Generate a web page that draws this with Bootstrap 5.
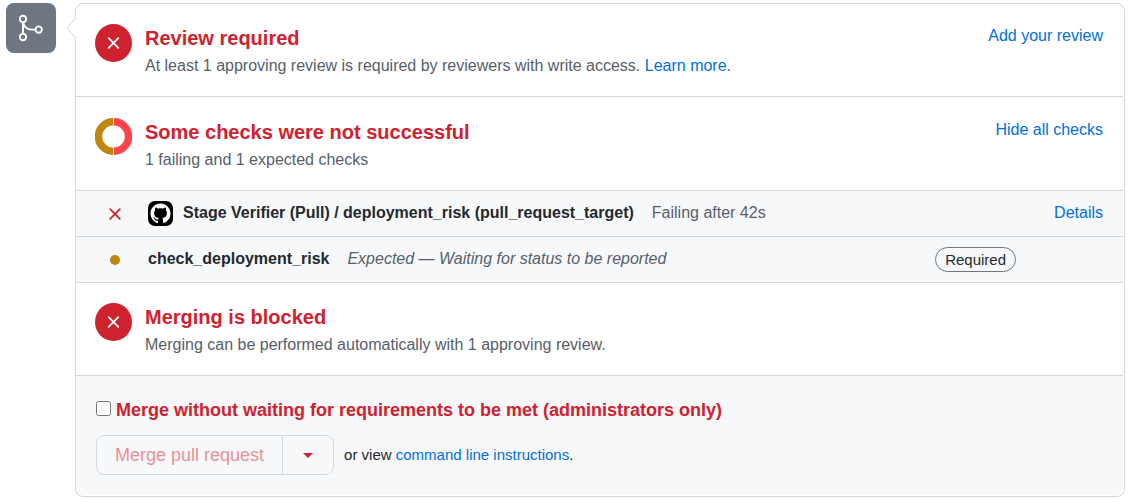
<!DOCTYPE html>
<html lang="en">
<head>
<meta charset="utf-8">
<meta name="viewport" content="width=device-width, initial-scale=1">
<title>Merge status</title>
<link rel="stylesheet" href="https://cdn.jsdelivr.net/npm/bootstrap@5.3.0/dist/css/bootstrap.min.css">
<style>
  :root { --line: #d0d7de; --soft: #f6f8fa; --danger: #cf222e; --ink: #24292f; --quiet: #57606a; --link: #0070dc; --pending: #bf8710; }
  body { font: 16px/26px "Liberation Sans", Arial, sans-serif; color: var(--ink); background: #fff; }
  a { color: var(--link); text-decoration: none; }
  a:hover { text-decoration: underline; }
  .merge-layout { padding: 3px 5px 5px 6px; }
  .merge-avatar { width: 50px; height: 50px; border-radius: 8px; background: #6e7781; color: #fff; }
  .merge-box { margin-left: 19px; border: 1px solid var(--line); border-radius: 8px; min-width: 0; padding: 0 1px 1px 0; }
  .box-caret { position: absolute; left: -10px; top: 14px; }
  .section-item { padding: 20px 20px 16px 19px; border-bottom: 1px solid var(--line); }
  .section-checks { padding-top: 21px; }
  .section-item h2 { font-size: 20px; line-height: 28px; font-weight: 700; color: var(--danger); margin: 0; }
  .section-item p { margin: 0; line-height: 28px; color: var(--quiet); }
  .status-circle { width: 37px; height: 38px; border-radius: 50%; background: var(--danger); color: #fff; margin-right: 13px; }
  .status-donut { margin-right: 13px; }
  .section-action { line-height: 24px; }
  .check-row { background: var(--soft); height: 46px; padding: 0 20px 0 19px; border-bottom: 1px solid var(--line); }
  .check-icon { width: 40px; margin-right: 13px; }
  .check-name, .check-desc, .check-link { line-height: 24px; padding-bottom: 2px; }
  .check-desc { color: var(--quiet); margin-left: 18px; }
  .check-avatar { margin-right: 10px; }
  .required-label { font-size: 15px; line-height: 23px; border: 1px solid #6e7781; border-radius: 25px; padding: 0 9px; margin-right: 87px; }
  .merge-footer { background: var(--soft); padding: 21px 20px 20px; border-radius: 0 0 7px 7px; }
  .admin-option label { font-size: 18px; font-weight: 700; color: var(--danger); }
  .admin-option input { width: 15px; height: 15px; margin: 0 5px 4px 0; }
  .merge-btn { height: 40px; font-size: 18px; line-height: 24px; background: var(--soft); border: 1px solid #d5d9dd; border-radius: 8px; color: var(--danger); padding: 0 18px; }
  .merge-btn:disabled { color: #e99296; background: var(--soft); border-color: #d5d9dd; opacity: 1; }
  .merge-menu { padding: 0 20px; }
  .merge-hint { font-size: 15px; margin-left: 10px; }
</style>
</head>
<body>
<main class="merge-layout d-flex align-items-start">
  <div class="merge-avatar d-flex flex-shrink-0 align-items-center justify-content-center">
    <svg width="30" height="30" viewBox="0 0 30 30" fill="none" stroke="currentColor" stroke-width="1.9" aria-hidden="true"><circle cx="7" cy="6" r="3.200"/><circle cx="7" cy="24" r="3.200"/><circle cx="22.700" cy="16.600" r="3.200"/><path d="M7 9.200v11.600M7 9.200c.8 4.600 4.400 7.400 9 7.400h3.500"/></svg>
  </div>

  <div class="merge-box flex-grow-1 position-relative">
    <svg class="box-caret" width="12" height="20" viewBox="0 0 12 20" aria-hidden="true"><path d="M12 0H10L1 10l9 10h2z" fill="#fff"/><path d="M9.500 0.500L.7 10l8.800 9.500" fill="none" stroke="#d0d7de"/></svg>

    <section class="section-item d-flex align-items-start">
      <span class="status-circle d-flex flex-shrink-0 align-items-center justify-content-center">
        <svg width="20" height="20" viewBox="0 0 20 20" stroke="currentColor" stroke-width="1.8" stroke-linecap="round" aria-hidden="true"><path d="M4.700 5.200l9.600 9.600M14.300 5.200l-9.600 9.600"/></svg>
      </span>
      <div class="flex-grow-1">
        <h2>Review required</h2>
        <p>At least 1 approving review is required by reviewers with write access. <a href="#">Learn more.</a></p>
      </div>
      <a class="section-action" href="#">Add your review</a>
    </section>

    <section class="section-item section-checks d-flex align-items-start">
      <svg class="status-donut flex-shrink-0" width="37" height="37" viewBox="0 0 37 37" fill="none" stroke-width="7.500" aria-hidden="true"><path d="M18.800 3.750a14.750 14.750 0 0 1 0 29.500" stroke="#ff444c"/><path d="M18.200 3.750a14.750 14.750 0 0 0 0 29.500" stroke="#bf8710"/></svg>
      <div class="flex-grow-1">
        <h2>Some checks were not successful</h2>
        <p>1 failing and 1 expected checks</p>
      </div>
      <a class="section-action" href="#">Hide all checks</a>
    </section>

    <div class="check-row d-flex align-items-center">
      <span class="check-icon d-flex flex-shrink-0 justify-content-center">
        <svg width="20" height="20" viewBox="0 0 20 20" stroke="#cf222e" stroke-width="1.8" stroke-linecap="round" aria-hidden="true"><path d="M5.200 5.200l9.600 9.600M14.800 5.200l-9.600 9.600"/></svg>
      </span>
      <svg class="check-avatar flex-shrink-0" width="25" height="25" viewBox="0 0 25 25" aria-hidden="true"><rect width="25" height="25" rx="7" fill="#000"/><g transform="translate(2.500 2.500) scale(1.25)"><path fill="#fff" d="M8 0C3.580 0 0 3.580 0 8c0 3.540 2.290 6.530 5.470 7.590.4.070.55-.17.55-.38 0-.19-.01-.82-.01-1.490-2.010.37-2.530-.49-2.690-.94-.09-.23-.48-.94-.82-1.130-.28-.15-.68-.52-.01-.53.63-.01 1.080.58 1.230.82.72 1.210 1.870.87 2.330.66.07-.52.28-.87.51-1.070-1.780-.2-3.640-.89-3.640-3.950 0-.87.31-1.590.82-2.150-.08-.2-.36-1.020.08-2.120 0 0 .67-.21 2.200.82.64-.18 1.320-.27 2-.27s1.360.09 2 .27c1.530-1.040 2.200-.82 2.200-.82.44 1.100.16 1.920.08 2.120.51.56.82 1.270.82 2.150 0 3.070-1.870 3.750-3.650 3.950.29.25.54.73.54 1.480 0 1.070-.01 1.930-.01 2.200 0 .21.15.46.55.38A8.013 8.013 0 0 0 16 8c0-4.420-3.580-8-8-8z"/></g></svg>
      <strong class="check-name">Stage Verifier (Pull) / deployment_risk (pull_request_target)</strong>
      <span class="check-desc">Failing after 42s</span>
      <a class="check-link ms-auto" href="#">Details</a>
    </div>

    <div class="check-row d-flex align-items-center">
      <span class="check-icon d-flex flex-shrink-0 justify-content-center">
        <svg width="10" height="10" viewBox="0 0 10 10" aria-hidden="true"><circle cx="5" cy="5" r="5" fill="#bf8710"/></svg>
      </span>
      <strong class="check-name">check_deployment_risk</strong>
      <em class="check-desc">Expected — Waiting for status to be reported</em>
      <span class="required-label ms-auto">Required</span>
    </div>

    <section class="section-item d-flex align-items-start">
      <span class="status-circle d-flex flex-shrink-0 align-items-center justify-content-center">
        <svg width="20" height="20" viewBox="0 0 20 20" stroke="currentColor" stroke-width="1.8" stroke-linecap="round" aria-hidden="true"><path d="M4.700 5.200l9.600 9.600M14.300 5.200l-9.600 9.600"/></svg>
      </span>
      <div class="flex-grow-1">
        <h2>Merging is blocked</h2>
        <p>Merging can be performed automatically with 1 approving review.</p>
      </div>
    </section>

    <div class="merge-footer">
      <div class="admin-option d-flex align-items-center">
        <input type="checkbox" id="bypass">
        <label for="bypass">Merge without waiting for requirements to be met (administrators only)</label>
      </div>
      <div class="d-flex align-items-center mt-2 pt-1">
        <div class="btn-group">
          <button type="button" class="btn merge-btn" disabled>Merge pull request</button>
          <button type="button" class="btn merge-btn merge-menu" aria-label="Select merge method">
            <svg class="d-block" width="10" height="5" viewBox="0 0 10 5" aria-hidden="true"><path d="M0 0h10L5 5z" fill="#cf222e"/></svg>
          </button>
        </div>
        <span class="merge-hint">or view <a href="#">command line instructions</a>.</span>
      </div>
    </div>
  </div>
</main>
<script src="https://cdn.jsdelivr.net/npm/bootstrap@5.3.0/dist/js/bootstrap.bundle.min.js"></script>
</body>
</html>
